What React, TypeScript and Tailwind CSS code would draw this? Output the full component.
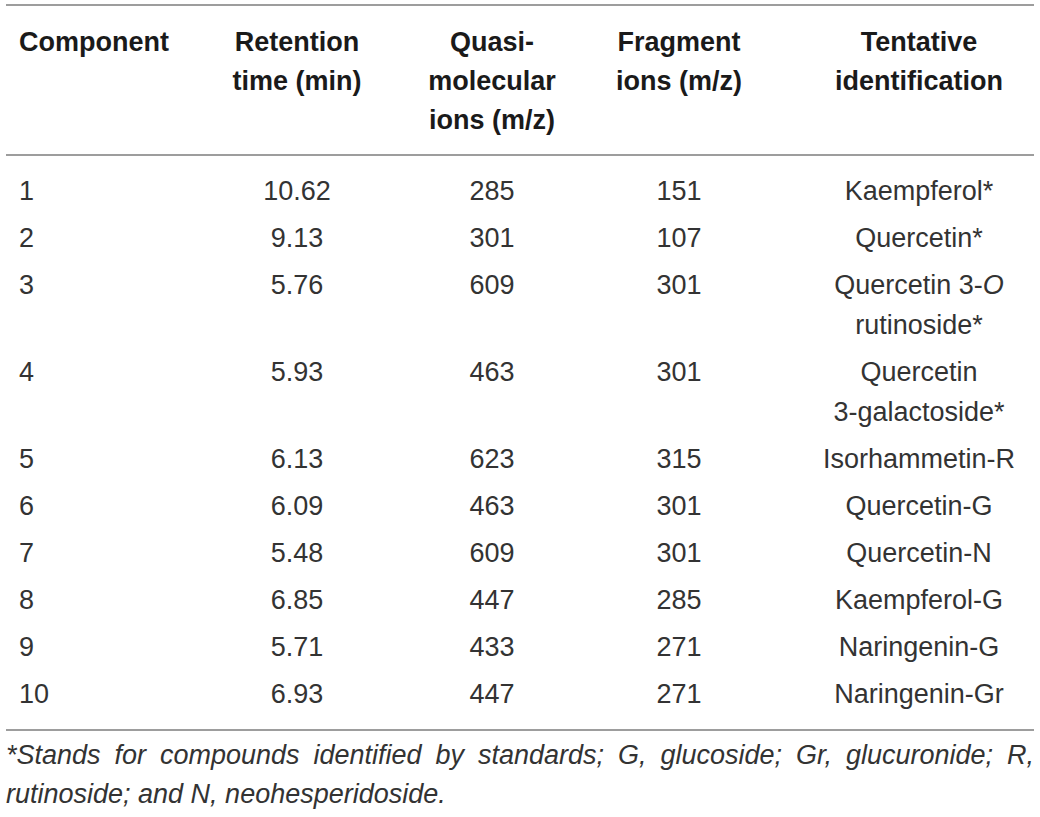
import React from "react";

type Row = { c: string; rt: string; q: string; f: string; id: React.ReactNode };

const rows: Row[] = [
  { c: "1", rt: "10.62", q: "285", f: "151", id: "Kaempferol*" },
  { c: "2", rt: "9.13", q: "301", f: "107", id: "Quercetin*" },
  {
    c: "3",
    rt: "5.76",
    q: "609",
    f: "301",
    id: (
      <>
        Quercetin 3-<i>O</i>
        <br />
        rutinoside*
      </>
    ),
  },
  {
    c: "4",
    rt: "5.93",
    q: "463",
    f: "301",
    id: (
      <>
        Quercetin
        <br />
        3-galactoside*
      </>
    ),
  },
  { c: "5", rt: "6.13", q: "623", f: "315", id: "Isorhammetin-R" },
  { c: "6", rt: "6.09", q: "463", f: "301", id: "Quercetin-G" },
  { c: "7", rt: "5.48", q: "609", f: "301", id: "Quercetin-N" },
  { c: "8", rt: "6.85", q: "447", f: "285", id: "Kaempferol-G" },
  { c: "9", rt: "5.71", q: "433", f: "271", id: "Naringenin-G" },
  { c: "10", rt: "6.93", q: "447", f: "271", id: "Naringenin-Gr" },
];

export default function App() {
  return (
    <div
      className="w-[1040px] h-[817px] bg-white overflow-hidden pt-[4px] pl-[6px] text-[#333333]"
      style={{ fontFamily: '"Liberation Sans", Arial, Helvetica, sans-serif' }}
    >
      <div className="w-[1028px]">
        <table className="w-[1028px] table-fixed border-collapse">
          <colgroup>
            <col className="w-[194px]" />
            <col className="w-[194px]" />
            <col className="w-[196px]" />
            <col className="w-[214px]" />
            <col className="w-[230px]" />
          </colgroup>
          <thead>
            <tr className="border-t-2 border-b-2 border-[#9d9d9d] text-[27px] leading-[39px] font-bold text-[#1a1a1a] align-top">
              <th className="text-left pl-[13px] pt-[17px] pb-[14px] font-bold">Component</th>
              <th className="text-center pt-[17px] pb-[14px] font-bold">
                Retention
                <br />
                time (min)
              </th>
              <th className="text-center pt-[17px] pb-[14px] font-bold">
                Quasi-
                <br />
                molecular
                <br />
                ions (m/z)
              </th>
              <th className="text-center pr-[36px] pt-[17px] pb-[14px] font-bold">
                Fragment
                <br />
                ions (m/z)
              </th>
              <th className="text-center pt-[17px] pb-[14px] font-bold">
                Tentative
                <br />
                identification
              </th>
            </tr>
          </thead>
          <tbody className="text-[27px] leading-[40px] border-b-2 border-[#9d9d9d]">
            <tr className="h-[12px]">
              <td colSpan={5} className="p-0 h-[12px]"></td>
            </tr>
            {rows.map((r) => (
              <tr key={r.c} className="align-top">
                <td className="text-left pl-[13px] py-[3.5px]">{r.c}</td>
                <td className="text-center py-[3.5px]">{r.rt}</td>
                <td className="text-center py-[3.5px]">{r.q}</td>
                <td className="text-center pr-[36px] py-[3.5px]">{r.f}</td>
                <td className="text-center py-[3.5px] whitespace-nowrap">{r.id}</td>
              </tr>
            ))}
            <tr className="h-[13px]">
              <td colSpan={5} className="p-0 h-[13px]"></td>
            </tr>
          </tbody>
        </table>
        <p className="italic text-[27px] leading-[39px] text-justify pt-[5px] text-[#333333]">
          *Stands for compounds identified by standards; G, glucoside; Gr, glucuronide; R, rutinoside; and N,
          neohesperidoside.
        </p>
      </div>
    </div>
  );
}
